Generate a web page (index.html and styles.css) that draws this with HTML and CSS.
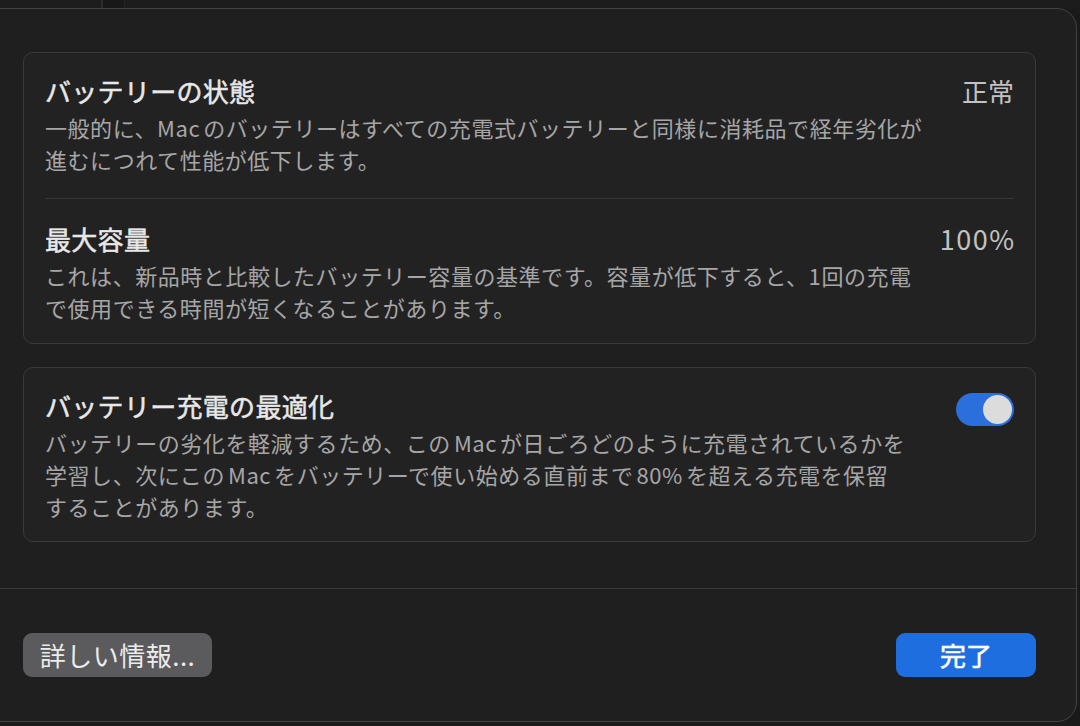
FILE: index.html
```html
<!DOCTYPE html>
<html lang="ja">
<head>
<meta charset="utf-8">
<link rel="stylesheet" href="styles.css">
</head>
<body>
<div class="strip"><span class="seg seg-a"></span><span class="seg seg-b"></span><span class="seg seg-c"></span></div>
<div class="dialog">
  <div class="main">
    <div class="card">
      <div class="row row-first">
        <div class="text">
          <div class="title">バッテリーの状態</div>
          <div class="desc">一般的に、Mac<span class="sp"></span>のバッテリーはすべての充電式バッテリーと同様に消耗品で経年劣化が<br>進むにつれて性能が低下します。</div>
        </div>
        <div class="value">正常</div>
      </div>
      <div class="divider"></div>
      <div class="row row-second">
        <div class="text">
          <div class="title">最大容量</div>
          <div class="desc">これは、新品時と比較したバッテリー容量の基準です。容量が低下すると、1回の充電<br>で使用できる時間が短くなることがあります。</div>
        </div>
        <div class="value value-num">100%</div>
      </div>
    </div>
    <div class="card card-opt">
      <div class="row row-opt">
        <div class="text">
          <div class="title">バッテリー充電の最適化</div>
          <div class="desc">バッテリーの劣化を軽減するため、この<span class="sp"></span>Mac<span class="sp"></span>が日ごろどのように充電されているかを<br>学習し、次にこの<span class="sp"></span>Mac<span class="sp"></span>をバッテリーで使い始める直前まで<span class="sp"></span>80%<span class="sp"></span>を超える充電を保留<br>することがあります。</div>
        </div>
        <div class="toggle"><span class="knob"></span></div>
      </div>
    </div>
  </div>
  <div class="footer">
    <button class="btn btn-gray">詳しい情報...</button>
    <button class="btn btn-blue">完了</button>
  </div>
</div>
</body>
</html>
```

FILE: styles.css
```css
* { box-sizing: border-box; }
html, body {
  margin: 0;
  padding: 0;
  background: #1a1a1a;
  overflow: hidden;
  width: 1080px;
  height: 726px;
}
body {
  font-family: "Noto Sans CJK JP", "Noto Sans", sans-serif;
  color: #e6e6e6;
}
.strip {
  height: 8px;
  display: flex;
  background: #1b1b1c;
}
.seg { display: block; height: 8px; }
.seg-a { width: 103px; background: #1d1d1e; border-right: 2px solid #2c2c2d; }
.seg-b { width: 22px; background: #181818; border-right: 1px solid #232324; }
.seg-c { flex: 1; background: #1c1c1d; }

.dialog {
  margin-left: -20px;
  width: 1097px;
  height: 714px;
  background: #201f20;
  border: 1px solid #434244;
  border-radius: 20px;
  display: flex;
  flex-direction: column;
}
.main {
  padding: 43px 40px 0 42px;
  height: 580px;
  border-bottom: 1px solid #3a393b;
}
.card {
  border: 1px solid #3a393b;
  border-radius: 10px;
  background: #232223;
  padding: 0 21px;
}
.card-opt {
  margin-top: 23px;
}
.row {
  display: flex;
  align-items: flex-start;
}
.row-first { padding: 22px 0 23px; }
.row-second { padding: 24px 0 20px; }
.row-opt { padding: 22px 0 19px; }
.text { flex: 1; }
.title {
  font-size: 26px;
  line-height: 32px;
  font-weight: 400;
  -webkit-text-stroke: 0.5px #e8e8e8;
  color: #e8e8e8;
  margin-bottom: 4px;
  letter-spacing: 0.3px;
}
.desc {
  font-size: 22px;
  line-height: 32px;
  color: #a6a6a6;
  letter-spacing: 0.55px;
}
.sp { display: inline-block; width: 3px; }
.value {
  font-size: 26px;
  line-height: 32px;
  color: #c2c2c2;
}
.value-num {
  font-size: 27px;
  letter-spacing: 1.5px;
  margin-right: -1.5px;
}
.divider {
  height: 1px;
  background: #353436;
}
.toggle {
  width: 58px;
  height: 33px;
  margin-top: 3px;
  border-radius: 17px;
  background: #2a6fdc;
  display: flex;
  align-items: center;
  justify-content: flex-end;
  padding-right: 2px;
}
.knob {
  display: block;
  width: 29px;
  height: 29px;
  border-radius: 50%;
  background: #dcdcdc;
}
.footer {
  flex: 1;
  display: flex;
  justify-content: space-between;
  align-items: flex-start;
  padding: 44px 40px 0 42px;
}
.btn {
  height: 44px;
  border: none;
  border-radius: 9px;
  font-family: "Noto Sans CJK JP", "Noto Sans", sans-serif;
  font-size: 26px;
  line-height: 44px;
  padding: 0;
  color: #ececec;
}
.btn-gray {
  width: 189px;
  background: #5b5a5c;
  letter-spacing: 0.5px;
}
.btn-blue {
  width: 140px;
  background: #1f6ee0;
  color: #ffffff;
  font-weight: 400;
  -webkit-text-stroke: 0.6px #ffffff;
}
```
